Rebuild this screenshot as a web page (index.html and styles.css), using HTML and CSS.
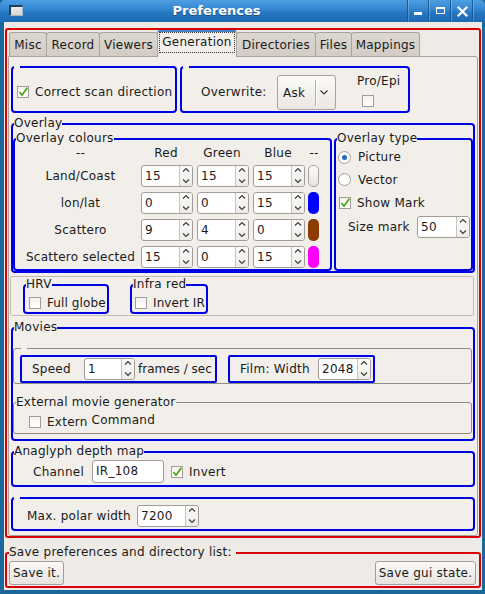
FILE: index.html
```html
<!DOCTYPE html>
<html>
<head>
<meta charset="utf-8">
<title>Preferences</title>
<link rel="stylesheet" href="styles.css">
</head>
<body>
<div class="win">
  <div class="titlebar">
    <div class="ticon-wrap"><div class="ticon"></div></div>
    <div class="ttitle">Preferences</div>
    <div class="tbtns">
      <div class="tbtn w21"><svg width="21" height="22" viewBox="0 0 21 22"><rect x="6" y="12" width="8" height="3" fill="#fff"/></svg></div>
      <div class="tbtn w22"><svg width="22" height="22" viewBox="0 0 22 22"><path d="M7.5 7.5 H15.5 V13.5 H7.5 Z" fill="none" stroke="#fff" stroke-width="1"/><rect x="7" y="7" width="9" height="2" fill="#fff"/></svg></div>
      <div class="tbtn w22"><svg width="22" height="22" viewBox="0 0 22 22"><path d="M7.5 7.5 L15.5 15.5 M15.5 7.5 L7.5 15.5" stroke="#fff" stroke-width="2.2" stroke-linecap="square"/></svg></div>
      <div class="tend"></div>
    </div>
  </div>
  <div class="client">
    <div class="redmain">
      <div class="tabs">
        <div class="tab t-misc">Misc</div>
        <div class="tab t-rec">Record</div>
        <div class="tab t-view">Viewers</div>
        <div class="tab active t-gen"><span class="focus">Generation</span></div>
        <div class="tab t-dir">Directories</div>
        <div class="tab t-files">Files</div>
        <div class="tab t-map">Mappings</div>
      </div>
      <div class="page">
        <div class="row1">
          <fieldset class="bx b-scan"><legend class="gap"></legend>
            <div class="scan-in">
              <span class="chk"><svg width="10" height="10" viewBox="0 0 10 10"><path d="M1.5 5 L4 8.2 L9.3 0.8" fill="none" stroke="#45a212" stroke-width="1.7"/></svg></span>
              <span>Correct scan direction</span>
            </div>
          </fieldset>
          <fieldset class="bx b-ow"><legend class="gap"></legend>
            <div class="ow-in">
              <span class="owl">Overwrite:</span>
              <div class="combo">
                <span class="combo-t">Ask</span>
                <span class="combo-sep"></span>
                <span class="combo-a"><svg width="8" height="5" viewBox="0 0 8 5"><path d="M0.5 0.5 L4 4 L7.5 0.5" fill="none" stroke="#333" stroke-width="1.1"/></svg></span>
              </div>
              <div class="proepi">
                <span>Pro/Epi</span>
                <span class="chk pe"></span>
              </div>
            </div>
          </fieldset>
        </div>

        <fieldset class="bx b-ov"><legend>Overlay</legend>
          <div class="ov-in">
            <fieldset class="bx b-col"><legend>Overlay colours</legend>
              <div class="cgrid">
                <span class="hd lab">--</span><span class="hd">Red</span><span class="hd">Green</span><span class="hd">Blue</span><span class="hd sw-h">--</span>

                <span class="lab">Land/Coast</span>
                <div class="spin"><span class="v">15</span><span class="ar"><svg width="12" height="20" viewBox="0 0 12 20"><path d="M3 5.5 L6 2.5 L9 5.5 M3 13.5 L6 16.5 L9 13.5" fill="none" stroke="#3a3a3a" stroke-width="1.1"/></svg></span></div>
                <div class="spin"><span class="v">15</span><span class="ar"><svg width="12" height="20" viewBox="0 0 12 20"><path d="M3 5.5 L6 2.5 L9 5.5 M3 13.5 L6 16.5 L9 13.5" fill="none" stroke="#3a3a3a" stroke-width="1.1"/></svg></span></div>
                <div class="spin"><span class="v">15</span><span class="ar"><svg width="12" height="20" viewBox="0 0 12 20"><path d="M3 5.5 L6 2.5 L9 5.5 M3 13.5 L6 16.5 L9 13.5" fill="none" stroke="#3a3a3a" stroke-width="1.1"/></svg></span></div>
                <span class="sw sw-white"></span>

                <span class="lab">lon/lat</span>
                <div class="spin"><span class="v">0</span><span class="ar"><svg width="12" height="20" viewBox="0 0 12 20"><path d="M3 5.5 L6 2.5 L9 5.5 M3 13.5 L6 16.5 L9 13.5" fill="none" stroke="#3a3a3a" stroke-width="1.1"/></svg></span></div>
                <div class="spin"><span class="v">0</span><span class="ar"><svg width="12" height="20" viewBox="0 0 12 20"><path d="M3 5.5 L6 2.5 L9 5.5 M3 13.5 L6 16.5 L9 13.5" fill="none" stroke="#3a3a3a" stroke-width="1.1"/></svg></span></div>
                <div class="spin"><span class="v">15</span><span class="ar"><svg width="12" height="20" viewBox="0 0 12 20"><path d="M3 5.5 L6 2.5 L9 5.5 M3 13.5 L6 16.5 L9 13.5" fill="none" stroke="#3a3a3a" stroke-width="1.1"/></svg></span></div>
                <span class="sw sw-blue"></span>

                <span class="lab">Scattero</span>
                <div class="spin"><span class="v">9</span><span class="ar"><svg width="12" height="20" viewBox="0 0 12 20"><path d="M3 5.5 L6 2.5 L9 5.5 M3 13.5 L6 16.5 L9 13.5" fill="none" stroke="#3a3a3a" stroke-width="1.1"/></svg></span></div>
                <div class="spin"><span class="v">4</span><span class="ar"><svg width="12" height="20" viewBox="0 0 12 20"><path d="M3 5.5 L6 2.5 L9 5.5 M3 13.5 L6 16.5 L9 13.5" fill="none" stroke="#3a3a3a" stroke-width="1.1"/></svg></span></div>
                <div class="spin"><span class="v">0</span><span class="ar"><svg width="12" height="20" viewBox="0 0 12 20"><path d="M3 5.5 L6 2.5 L9 5.5 M3 13.5 L6 16.5 L9 13.5" fill="none" stroke="#3a3a3a" stroke-width="1.1"/></svg></span></div>
                <span class="sw sw-brown"></span>

                <span class="lab">Scattero selected</span>
                <div class="spin"><span class="v">15</span><span class="ar"><svg width="12" height="20" viewBox="0 0 12 20"><path d="M3 5.5 L6 2.5 L9 5.5 M3 13.5 L6 16.5 L9 13.5" fill="none" stroke="#3a3a3a" stroke-width="1.1"/></svg></span></div>
                <div class="spin"><span class="v">0</span><span class="ar"><svg width="12" height="20" viewBox="0 0 12 20"><path d="M3 5.5 L6 2.5 L9 5.5 M3 13.5 L6 16.5 L9 13.5" fill="none" stroke="#3a3a3a" stroke-width="1.1"/></svg></span></div>
                <div class="spin"><span class="v">15</span><span class="ar"><svg width="12" height="20" viewBox="0 0 12 20"><path d="M3 5.5 L6 2.5 L9 5.5 M3 13.5 L6 16.5 L9 13.5" fill="none" stroke="#3a3a3a" stroke-width="1.1"/></svg></span></div>
                <span class="sw sw-mag"></span>
              </div>
            </fieldset>
            <fieldset class="bx b-type"><legend>Overlay type</legend>
              <div class="type-in">
                <div class="trow r1"><span class="radio on"><span class="dot"></span></span><span class="tl">Picture</span></div>
                <div class="trow"><span class="radio"></span><span class="tl">Vector</span></div>
                <div class="trow sm"><span class="chk"><svg width="10" height="10" viewBox="0 0 10 10"><path d="M1.5 5 L4 8.2 L9.3 0.8" fill="none" stroke="#45a212" stroke-width="1.7"/></svg></span><span class="tl2">Show Mark</span></div>
                <div class="srow"><span>Size mark</span>
                  <div class="spin s53"><span class="v">50</span><span class="ar"><svg width="12" height="20" viewBox="0 0 12 20"><path d="M3 5.5 L6 2.5 L9 5.5 M3 13.5 L6 16.5 L9 13.5" fill="none" stroke="#3a3a3a" stroke-width="1.1"/></svg></span></div>
                </div>
              </div>
            </fieldset>
          </div>
        </fieldset>

        <div class="hrvf">
          <fieldset class="bx b-hrv"><legend>HRV</legend>
            <div class="small-in"><span class="chk"></span><span class="sl">Full globe</span></div>
          </fieldset>
          <fieldset class="bx b-ir"><legend>Infra red</legend>
            <div class="small-in ir"><span class="chk"></span><span class="sl">Invert IR</span></div>
          </fieldset>
        </div>

        <fieldset class="bx b-mov"><legend>Movies</legend>
          <fieldset class="gframe g1"><legend class="gap1"></legend>
            <div class="mov-row">
              <div class="mbox b-speed">
                <span class="lbl-speed">Speed</span>
                <div class="spin s51"><span class="v">1</span><span class="ar"><svg width="12" height="20" viewBox="0 0 12 20"><path d="M3 5.5 L6 2.5 L9 5.5 M3 13.5 L6 16.5 L9 13.5" fill="none" stroke="#3a3a3a" stroke-width="1.1"/></svg></span></div>
                <span class="fps">frames / sec</span>
              </div>
              <div class="mbox b-film">
                <span class="lbl-film">Film: Width</span>
                <div class="spin s53"><span class="v">2048</span><span class="ar"><svg width="12" height="20" viewBox="0 0 12 20"><path d="M3 5.5 L6 2.5 L9 5.5 M3 13.5 L6 16.5 L9 13.5" fill="none" stroke="#3a3a3a" stroke-width="1.1"/></svg></span></div>
              </div>
            </div>
          </fieldset>
          <fieldset class="gframe g2"><legend>External movie generator</legend>
            <div class="ext-in"><span class="chk"></span><span class="ext1">Extern</span><span class="ext2">Command</span></div>
          </fieldset>
        </fieldset>

        <fieldset class="bx b-ana"><legend>Anaglyph depth map</legend>
          <div class="ana-in">
            <span class="lbl-ch">Channel</span>
            <span class="entry">IR_108</span>
            <span class="chk inv"><svg width="10" height="10" viewBox="0 0 10 10"><path d="M1.5 5 L4 8.2 L9.3 0.8" fill="none" stroke="#45a212" stroke-width="1.7"/></svg></span>
            <span class="invl">Invert</span>
          </div>
        </fieldset>

        <fieldset class="bx b-max"><legend class="gap"></legend>
          <div class="max-in">
            <span class="lbl-max">Max. polar width</span>
            <div class="spin s62"><span class="v">7200</span><span class="ar"><svg width="12" height="20" viewBox="0 0 12 20"><path d="M3 5.5 L6 2.5 L9 5.5 M3 13.5 L6 16.5 L9 13.5" fill="none" stroke="#3a3a3a" stroke-width="1.1"/></svg></span></div>
          </div>
        </fieldset>
      </div>
    </div>
    <fieldset class="redsave"><legend>Save preferences and directory list:</legend>
      <div class="save-in">
        <span class="btn b-save">Save it.</span>
        <span class="btn b-gui">Save gui state.</span>
      </div>
    </fieldset>
  </div>
</div>
</body>
</html>
```

FILE: styles.css
```css
* { box-sizing: border-box; }
html, body { margin: 0; padding: 0; }
body {
  width: 485px;
  height: 594px;
  overflow: hidden;
  font-family: "DejaVu Sans", "Liberation Sans", sans-serif;
  font-size: 12px;
  letter-spacing: 0.25px;
  white-space: nowrap;
  color: #1a1a1a;
  background: #1b669a;
}
.win {
  width: 485px;
  height: 594px;
  background: #1b669a;
  display: flex;
  flex-direction: column;
}
.titlebar {
  height: 22px;
  flex: none;
  display: flex;
  background: linear-gradient(#4f9de0 0%, #3488d2 40%, #2676c2 60%, #1e6ab3 100%);
  border-radius: 5px 5px 0 0;
}
.ticon-wrap { width: 26px; padding: 5px 0 0 9px; }
.ticon {
  width: 14px;
  height: 11px;
  background: linear-gradient(#e9e9e6, #d6d6d2);
  border-top: 2px solid #1d3f62;
  border-left: 2px solid #1d3f62;
  border-right: 1px solid #9db6cc;
  border-bottom: 1px solid #9db6cc;
}
.ttitle {
  flex: 1;
  text-align: center;
  color: #fff;
  font-weight: bold;
  font-size: 13px;
  letter-spacing: 0;
  line-height: 22px;
  text-shadow: 0 1px 1px rgba(0,0,0,0.35);
}
.tbtns { display: flex; width: 78px; }
.tbtn {
  height: 22px;
  border-left: 1px solid #1b5c95;
  box-shadow: inset 1px 0 0 rgba(255,255,255,0.22);
}
.tbtn svg { display: block; }
.w21 { width: 21px; }
.w22 { width: 22px; }
.tend { width: 13px; border-left: 1px solid #1b5c95; box-shadow: inset 1px 0 0 rgba(255,255,255,0.22); border-radius: 0 5px 0 0; }

.client {
  flex: 1;
  margin: 0 3px 4px 4px;
  background: #eeeae5;
  display: flex;
  flex-direction: column;
  padding: 6px 1px 0 1px;
}
.redmain {
  height: 510px;
  flex: none;
  border: 2px solid #d80000;
  border-radius: 3px;
  padding: 0 1px;
  display: flex;
  flex-direction: column;
}
.tabs {
  display: flex;
  align-items: flex-end;
  height: 26px;
  margin-left: 1px;
  flex: none;
}
.tab {
  height: 24px;
  border: 1px solid #a7a29b;
  border-bottom: none;
  border-radius: 3px 3px 0 0;
  background: linear-gradient(#dcd7d1, #d2ccc5);
  display: flex;
  align-items: center;
  justify-content: center;
  margin-left: -1px;
  padding-top: 1px;
}
.t-misc { width: 38px; margin-left: 0; }
.t-rec { width: 54px; }
.t-view { width: 59px; }
.t-gen { width: 80px; }
.t-dir { width: 80px; }
.t-files { width: 37px; }
.t-map { width: 69px; }
.tab.active {
  height: 27px;
  margin-bottom: -1px;
  background: #f2efeb;
  border-top: 2px solid #3f80c8;
  position: relative;
  z-index: 1;
  align-items: flex-start;
  padding-top: 0;
}
.focus {
  border: 1px dotted #333;
  line-height: 19px;
  padding: 0 2px;
}
.page {
  flex: 1;
  border: 1px solid #a7a29b;
  border-radius: 0 3px 3px 3px;
  background: #f2efeb;
  padding: 9px 2px 0 2px;
}

fieldset { margin: 0; padding: 0; min-width: 0; }
legend { padding: 0; margin-left: 1px; line-height: 15px; }
legend.gap { width: 6px; height: 2px; margin-left: 1px; }
legend.gap1 { width: 6px; height: 1px; margin-left: 1px; }
.bx {
  border: 2px solid #0000e6;
  border-radius: 4px;
}

.row1 { display: flex; gap: 3px; height: 47px; }
.b-scan { width: 166px; height: 47px; }
.b-ow { width: 230px; height: 47px; }
.scan-in {
  display: flex;
  align-items: center;
  height: 43px;
  padding: 5px 0 0 4px;
  gap: 6px;
}
.chk {
  width: 12px;
  height: 12px;
  flex: none;
  border: 1px solid #a29d96;
  background: linear-gradient(#f4f3f1, #ffffff);
  display: inline-flex;
  align-items: center;
  justify-content: center;
}
.chk svg { display: block; }
.ow-in {
  display: flex;
  align-items: flex-start;
  height: 43px;
  padding-left: 19px;
}
.owl { width: 76px; margin-top: 17px; line-height: 15px; }
.combo {
  width: 59px;
  height: 35px;
  margin-top: 7px;
  border: 1px solid #a8a39c;
  border-radius: 3px;
  background: linear-gradient(#fbfaf9, #ebe7e2);
  display: flex;
  align-items: center;
  padding-left: 5px;
}
.combo-t { width: 32px; }
.combo-sep { width: 2px; height: 26px; border-left: 1px solid #b3aea7; border-right: 1px solid #fff; }
.combo-a { padding-left: 3px; display: flex; }
.combo-a svg { display: block; }
.proepi {
  display: flex;
  flex-direction: column;
  margin: 6px 0 0 21px;
  line-height: 15px;
}
.chk.pe { margin: 6px 0 0 5px; }

.b-ov { margin-top: 3px; }
.ov-in { display: flex; gap: 2px; }
.b-col { width: 319px; }
.b-type { width: 139px; }
.cgrid {
  display: grid;
  grid-template-columns: 113px 52px 52px 52px 11px;
  grid-template-rows: 14px repeat(4, 22px);
  column-gap: 4px;
  row-gap: 5px;
  padding: 0 0 1px 9px;
}
.hd { justify-self: center; align-self: center; line-height: 14px; padding-right: 2px; }
.hd.lab { padding-right: 0; }
.hd.sw-h { padding-right: 0; margin-left: -1px; }
.lab { justify-self: center; align-self: center; }
.spin {
  display: flex;
  height: 22px;
  border: 1px solid #a29d96;
  border-radius: 3px;
  background: #fff;
}
.spin .v { flex: 1; padding-left: 3px; line-height: 20px; }
.spin .ar {
  width: 13px;
  border-left: 1px solid #c8c3bd;
  background: linear-gradient(#fdfcfb, #eeebe7);
  border-radius: 0 2px 2px 0;
}
.spin .ar svg { display: block; }
.sw {
  width: 11px;
  height: 22px;
  margin-left: -1px;
  border-radius: 5px;
}
.sw-white { background: linear-gradient(#fbfaf9, #e9e6e2); border: 1px solid #a8a39c; }
.sw-blue { background: #0000ff; }
.sw-brown { background: #8c3c00; }
.sw-mag { background: #ff00ff; }

.type-in { padding-left: 2px; }
.trow { display: flex; align-items: center; height: 23px; }
.trow.r1 { height: 22px; }
.radio {
  width: 13px;
  height: 13px;
  border-radius: 50%;
  border: 1px solid #a29d96;
  background: #fff;
  display: inline-flex;
  align-items: center;
  justify-content: center;
  flex: none;
}
.radio .dot { width: 5px; height: 5px; border-radius: 50%; background: #2366c8; }
.tl { margin-left: 7px; }
.trow.sm { padding-left: 1px; }
.tl2 { margin-left: 6px; }
.srow {
  display: flex;
  align-items: center;
  justify-content: space-between;
  margin-top: 2px;
  padding: 0 1px 1px 10px;
}
.s53 { width: 53px; }
.s51 { width: 51px; }
.s62 { width: 62px; }

.hrvf {
  margin: 3px 1px 0 -1px;
  height: 40px;
  border: 1px solid #c2bdb6;
  border-radius: 2px;
  display: flex;
  align-items: flex-start;
  gap: 21px;
  padding-left: 12px;
}
.b-hrv { width: 86px; height: 37px; }
.b-ir { width: 78px; height: 37px; }
.small-in { display: flex; align-items: center; height: 19px; padding: 2px 0 0 4px; }
.small-in.ir { padding-left: 3px; }
.sl { margin-left: 6px; letter-spacing: 0.1px; }

.b-mov { margin-top: 4px; padding-bottom: 5px; }
.gframe {
  border: 1px solid #8f8b85;
  border-radius: 3px;
  margin-right: 1px;
}
.g1 { margin-top: 13px; padding: 6px 0 0 6px; }
.mov-row { display: flex; gap: 11px; }
.mbox {
  height: 28px;
  border: 2px solid #0000e6;
  border-radius: 2px;
  display: flex;
  align-items: center;
  padding-left: 10px;
}
.b-speed { width: 197px; }
.b-film { width: 147px; }
.lbl-speed { width: 52px; }
.fps { margin-left: 3px; letter-spacing: 0; }
.lbl-film { width: 78px; }
.g2 { margin-top: 11px; }
.g2 legend { margin-left: 2px; }
.ext-in { display: flex; align-items: center; height: 23px; padding-left: 15px; }
.ext1 { margin-left: 6px; }
.ext2 { margin-left: 4px; margin-bottom: 4px; }

.b-ana { margin-top: 3px; }
.ana-in { display: flex; align-items: center; height: 26px; padding: 0 0 1px 20px; }
.lbl-ch { width: 59px; }
.entry {
  width: 72px;
  height: 23px;
  border: 1px solid #a29d96;
  border-radius: 3px;
  background: #fff;
  padding-left: 3px;
  line-height: 21px;
}
.chk.inv { margin-left: 7px; }
.invl { margin-left: 6px; }

.b-max { margin-top: 10px; }
.max-in { display: flex; align-items: center; height: 30px; padding: 6px 0 2px 14px; }
.lbl-max { width: 110px; }

.redsave {
  margin-top: 7px;
  height: 43px;
  border: 2px solid #d80000;
  border-radius: 3px;
}
.redsave legend { margin-left: 2px; padding-right: 4px; }
.save-in { display: flex; justify-content: space-between; padding: 1px 3px 0 2px; }
.btn {
  height: 24px;
  border: 1px solid #a39e97;
  border-radius: 3px;
  background: linear-gradient(#fbfaf9, #e7e3de);
  display: flex;
  align-items: center;
  justify-content: center;
}
.b-save { width: 55px; }
.b-gui { width: 101px; }
```
